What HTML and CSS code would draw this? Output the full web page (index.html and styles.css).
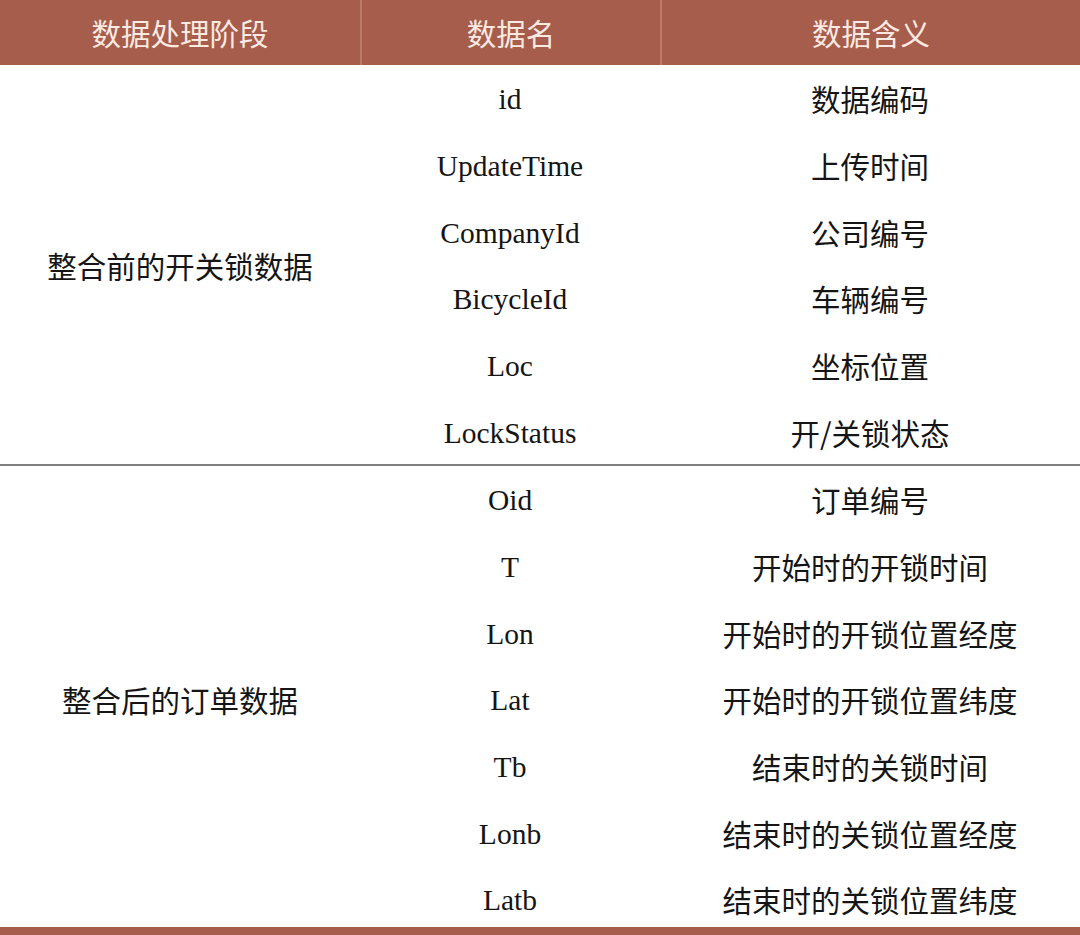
FILE: index.html
```html
<!DOCTYPE html>
<html lang="zh-CN">
<head>
<meta charset="utf-8">
<title>数据表</title>
<link rel="stylesheet" href="styles.css">
</head>
<body>
<div class="table">
  <div class="head">
    <div class="hcell">数据处理阶段</div>
    <div class="hcell">数据名</div>
    <div class="hcell">数据含义</div>
  </div>
  <div class="group">
    <div class="stage">整合前的开关锁数据</div>
    <div class="rows">
      <div class="row"><div class="name">id</div><div class="desc">数据编码</div></div>
      <div class="row"><div class="name">UpdateTime</div><div class="desc">上传时间</div></div>
      <div class="row"><div class="name">CompanyId</div><div class="desc">公司编号</div></div>
      <div class="row"><div class="name">BicycleId</div><div class="desc">车辆编号</div></div>
      <div class="row"><div class="name">Loc</div><div class="desc">坐标位置</div></div>
      <div class="row"><div class="name">LockStatus</div><div class="desc">开/关锁状态</div></div>
    </div>
  </div>
  <div class="divider"></div>
  <div class="group">
    <div class="stage">整合后的订单数据</div>
    <div class="rows">
      <div class="row"><div class="name">Oid</div><div class="desc">订单编号</div></div>
      <div class="row"><div class="name">T</div><div class="desc">开始时的开锁时间</div></div>
      <div class="row"><div class="name">Lon</div><div class="desc">开始时的开锁位置经度</div></div>
      <div class="row"><div class="name">Lat</div><div class="desc">开始时的开锁位置纬度</div></div>
      <div class="row"><div class="name">Tb</div><div class="desc">结束时的关锁时间</div></div>
      <div class="row"><div class="name">Lonb</div><div class="desc">结束时的关锁位置经度</div></div>
      <div class="row"><div class="name">Latb</div><div class="desc">结束时的关锁位置纬度</div></div>
    </div>
  </div>
  <div class="footbar"></div>
</div>
</body>
</html>
```
FILE: styles.css
```css
html, body {
  margin: 0;
  padding: 0;
  background: #ffffff;
}
body {
  width: 1080px;
  height: 935px;
  overflow: hidden;
  font-family: "Liberation Serif", "Noto Sans CJK SC", serif;
  font-size: 29.5px;
  color: #151515;
}
.table {
  display: flex;
  flex-direction: column;
  width: 1080px;
}
.head {
  display: grid;
  grid-template-columns: 360px 300px 420px;
  height: 65px;
  background: #a65d4b;
}
.hcell {
  display: flex;
  align-items: center;
  justify-content: center;
  font-family: "Noto Sans CJK SC", sans-serif;
  font-size: 29.5px;
  color: #fbe9e2;
  padding-bottom: 2px;
}
.hcell + .hcell {
  border-left: 2px solid #bd7a68;
}
.group {
  display: grid;
  grid-template-columns: 360px 720px;
}
.stage {
  display: flex;
  align-items: center;
  justify-content: center;
  font-family: "Noto Sans CJK SC", sans-serif;
}
.rows {
  display: flex;
  flex-direction: column;
}
.row {
  display: grid;
  grid-template-columns: 300px 420px;
  height: 66.67px;
}
.name, .desc {
  display: flex;
  align-items: center;
  justify-content: center;
}
.name {
  padding-top: 3px;
}
.desc {
  font-family: "Noto Sans CJK SC", sans-serif;
}
.divider {
  height: 2px;
  background: #808080;
  margin-top: -1px;
}
.footbar {
  height: 8px;
  background: #a65d4b;
  margin-top: -6px;
}
```
